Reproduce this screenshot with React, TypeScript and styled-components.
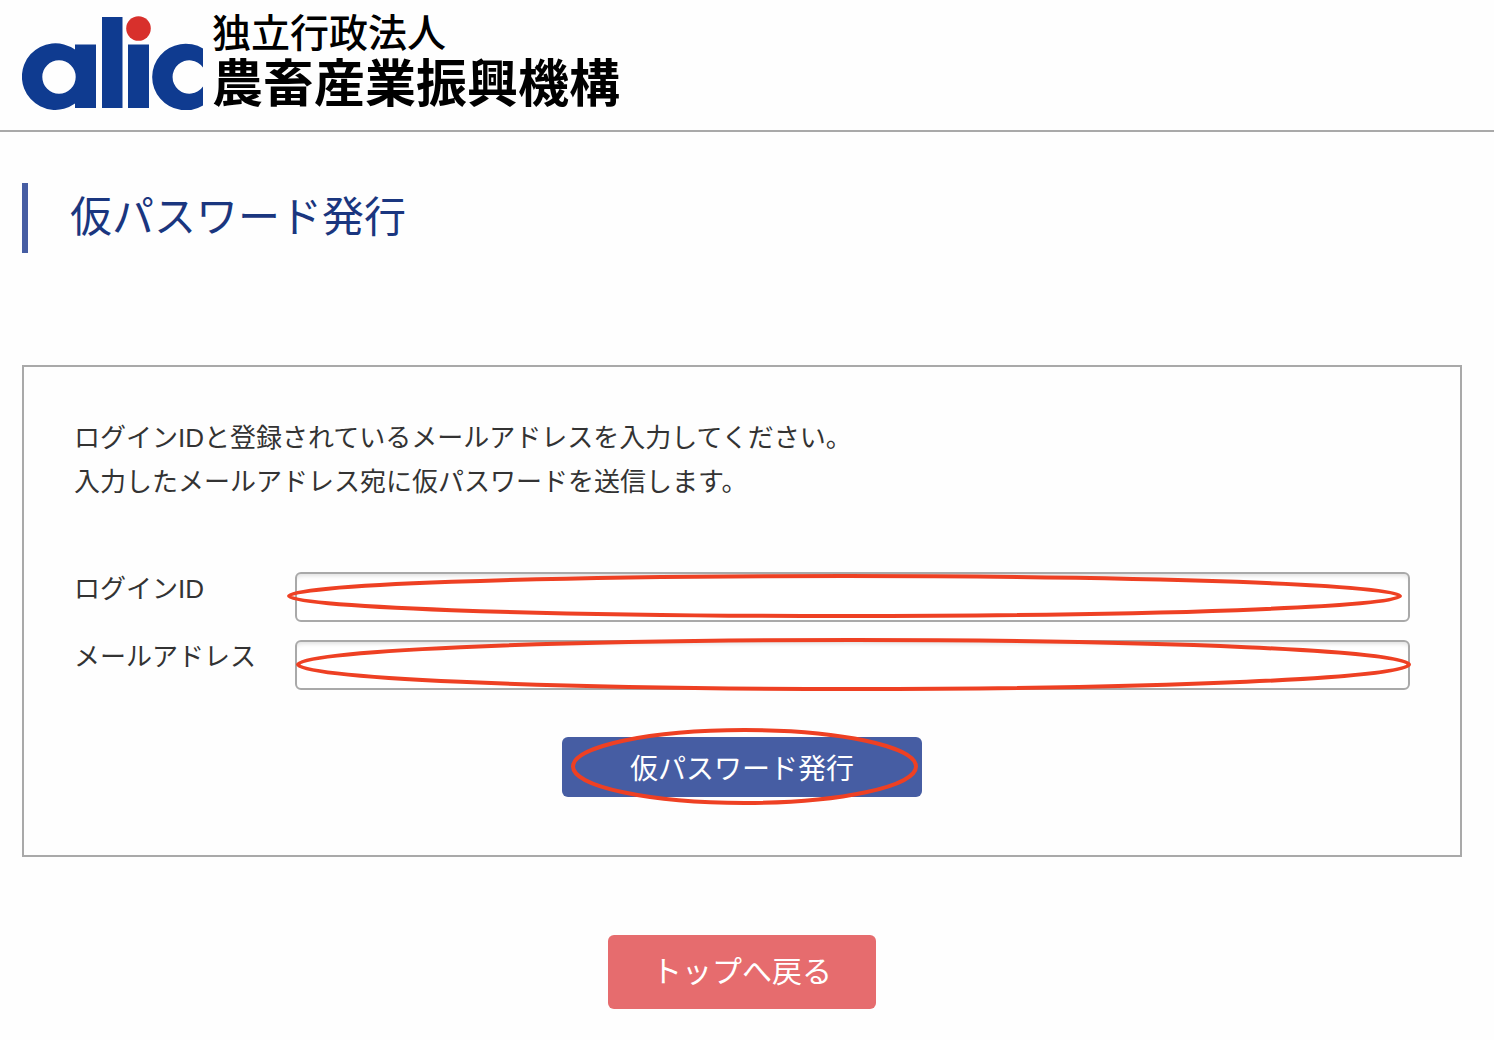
import React from "react";
import styled, { createGlobalStyle } from "styled-components";

const colors = {
  line: "#a9a9a9",
  text: "#333333",
  navy: "#1a367f",
  blue: "#465da3",
  coral: "#e66c6e",
  mark: "#ee4023",
  logoBlue: "#0f3b90",
  logoRed: "#d8302c",
};

const GlobalStyle = createGlobalStyle`
  *, *::before, *::after { box-sizing: border-box; }
  body {
    margin: 0;
    background: #fefefe;
    color: ${colors.text};
    font-family: "Liberation Sans", "Noto Sans CJK JP", sans-serif;
    font-size: 26px;
  }
`;

const Header = styled.header`
  display: flex;
  padding: 14px 22px 20px;
  border-bottom: 2px solid ${colors.line};
`;

const LogoLink = styled.a`
  display: flex;
  align-items: flex-end;
  gap: 8px;
  color: #000;
  text-decoration: none;
`;

const LogoMark = styled.svg`
  display: block;
  width: 182px;
  height: 96px;
`;

const LogoText = styled.span`
  display: flex;
  flex-direction: column;
  gap: 6px;
  white-space: nowrap;
`;

const OrgType = styled.span`
  font-size: 39px;
  line-height: 39px;
  font-weight: 500;
`;

const OrgName = styled.span`
  font-size: 51px;
  line-height: 51px;
  font-weight: 700;
`;

const Main = styled.main`
  padding: 51px 32px 31px 22px;
`;

const Title = styled.h1`
  margin: 0 0 112px;
  padding-left: 42px;
  border-left: 6px solid ${colors.blue};
  color: ${colors.navy};
  font-size: 42px;
  line-height: 70px;
  font-weight: 400;
`;

const Panel = styled.form`
  display: flex;
  flex-direction: column;
  padding: 49px 50px 58px;
  border: 2px solid ${colors.line};
`;

const Guide = styled.p`
  margin: 0 0 68px;
  line-height: 44px;
`;

const Fields = styled.div`
  display: grid;
  gap: 18px;
`;

const FieldRow = styled.div`
  display: grid;
  grid-template-columns: 221px 1fr;
  align-items: start;
`;

const FieldLabel = styled.label`
  line-height: 34px;
`;

const Marked = styled.div`
  position: relative;
  display: flex;
`;

const TextInput = styled.input`
  width: 100%;
  height: 50px;
  padding: 0 12px;
  border: 2px solid ${colors.line};
  border-radius: 6px;
  background: #fff;
  box-shadow: inset 0 5px 4px -3px rgba(0, 0, 0, 0.12);
  color: inherit;
  font: inherit;
  outline: none;
`;

const RingArea = styled.span<{ $inset: string }>`
  position: absolute;
  inset: ${(p) => p.$inset};
  pointer-events: none;
`;

const Ring = styled.svg`
  display: block;
  width: 100%;
  height: 100%;
  overflow: visible;

  ellipse {
    rx: calc(50% - 2px);
    ry: calc(50% - 2px);
    fill: none;
    stroke: ${colors.mark};
    stroke-width: 4px;
  }
`;

const Actions = styled.div<{ $top: number }>`
  display: flex;
  justify-content: center;
  margin-top: ${(p) => p.$top}px;
`;

const SubmitButton = styled.button`
  width: 360px;
  height: 60px;
  padding: 0;
  border: 0;
  border-radius: 6px;
  background: ${colors.blue};
  color: #fff;
  font: inherit;
  font-size: 28px;
  cursor: pointer;
`;

const BackLink = styled.a`
  padding: 0 44px;
  border-radius: 6px;
  background: ${colors.coral};
  color: #fff;
  font-size: 30px;
  line-height: 74px;
  text-decoration: none;
`;

function Highlight({ inset }: { inset: string }) {
  return (
    <RingArea $inset={inset} aria-hidden="true">
      <Ring>
        <ellipse cx="50%" cy="50%" />
      </Ring>
    </RingArea>
  );
}

function AlicLogo() {
  return (
    <LogoMark viewBox="22 14 182 96" role="img" aria-label="alic">
      <g fill={colors.logoBlue} fillRule="evenodd">
        <path d="M75 44.5H96V108H75V103.6A33.5 33.3 0 1 1 75 49.6ZM59 60.3a16.7 16.7 0 1 0 0 33.4a16.7 16.7 0 1 0 0-33.4Z" />
        <path d="M102 17h20.5v91H102Z" />
        <path d="M128 44.5h21V108h-21Z" />
        <path d="M203 48.5V67.5A16.7 16.7 0 1 0 203 86.500V105.500A33.5 33.3 0 1 1 203 48.5Z" />
      </g>
      <circle cx="138.5" cy="28.5" r="12.3" fill={colors.logoRed} />
    </LogoMark>
  );
}

const fields = [
  { id: "login-id", label: "ログインID", type: "text", ring: "2px 8px 4px -8px" },
  { id: "email", label: "メールアドレス", type: "email", ring: "-2px -1px -1px 1px" },
];

export default function App() {
  return (
    <>
      <GlobalStyle />
      <Header>
        <LogoLink href="#">
          <AlicLogo />
          <LogoText>
            <OrgType>独立行政法人</OrgType>
            <OrgName>農畜産業振興機構</OrgName>
          </LogoText>
        </LogoLink>
      </Header>
      <Main>
        <Title>仮パスワード発行</Title>
        <Panel onSubmit={(e) => e.preventDefault()}>
          <Guide>
            ログインIDと登録されているメールアドレスを入力してください。
            <br />
            入力したメールアドレス宛に仮パスワードを送信します。
          </Guide>
          <Fields>
            {fields.map((f) => (
              <FieldRow key={f.id}>
                <FieldLabel htmlFor={f.id}>{f.label}</FieldLabel>
                <Marked>
                  <TextInput id={f.id} name={f.id} type={f.type} />
                  <Highlight inset={f.ring} />
                </Marked>
              </FieldRow>
            ))}
          </Fields>
          <Actions $top={47}>
            <Marked>
              <SubmitButton type="submit">仮パスワード発行</SubmitButton>
              <Highlight inset="-9px 4px -8px 9px" />
            </Marked>
          </Actions>
        </Panel>
        <Actions $top={78}>
          <BackLink href="#">トップへ戻る</BackLink>
        </Actions>
      </Main>
    </>
  );
}
